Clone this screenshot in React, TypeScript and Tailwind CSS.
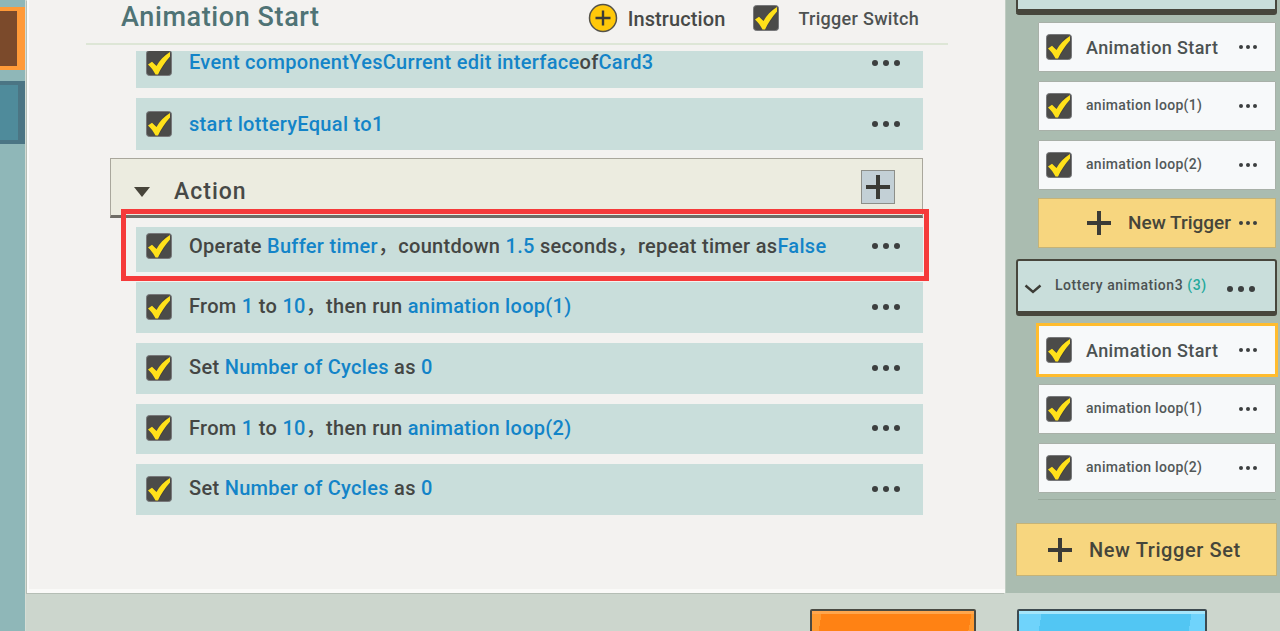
import React from 'react';

const blue = 'text-[#1384c8]';

const Check = () => (
  <svg width="28" height="28" viewBox="0 0 28 28" className="shrink-0">
    <rect x="1.5" y="1.5" width="25" height="25" rx="3" fill="#4b4b49" stroke="#77787a" strokeWidth="1" />
    <path d="M6.5 15.5 L12.5 21.5 L23 5" fill="none" stroke="#33332a" strokeWidth="6" strokeLinejoin="round" opacity="0.35" />
    <path d="M3 15.5 L7 12.8 L11.5 17 C14.5 11.5 19 6.5 25 3 L25 7.5 C20 13 16 19 13 25.5 L10.5 25.5 C8.5 21.5 6 18.2 3 15.5 Z" fill="#ffe11a" />
  </svg>
);

const Dots = ({ small }: { small?: boolean }) => (
  <div className={small ? 'flex gap-[3px]' : 'flex gap-[5px]'}>
    {[0, 1, 2].map((i) => (
      <span key={i} className={small ? 'w-[4px] h-[4px] rounded-full bg-[#3c3f3f]' : 'w-[6px] h-[6px] rounded-full bg-[#3c3f3f]'} />
    ))}
  </div>
);

const Plus = ({ size = 24 }: { size?: number }) => (
  <svg width={size} height={size} viewBox="0 0 24 24" className="shrink-0">
    <path d="M10 0h4v10h10v4H14v10h-4V14H0v-4h10z" fill="#3b3b36" />
  </svg>
);

const B = ({ children }: { children: React.ReactNode }) => <span className={blue}>{children}</span>;

const Row = ({ children, className = 'h-[51px] pb-[2px]' }: { children: React.ReactNode; className?: string }) => (
  <div className={`flex items-center bg-[#c9dedb] pl-[9px] pr-[23px] shrink-0 ${className}`}>
    <Check />
    <div className="ml-[16px] -mt-[1px] flex-1 text-[20px] font-medium tracking-[0.3px] whitespace-pre text-[#444644]">{children}</div>
    <Dots />
  </div>
);

const SideItem = ({ label, big }: { label: string; big?: boolean }) => (
  <div className="flex items-center h-[50px] bg-[#f7f9fa] border border-[#a8b0a8] rounded-[1px] pl-[6px] pr-[18px]">
    <Check />
    <div className={big ? 'ml-[13px] flex-1 text-[18px] font-medium tracking-[0.4px] text-[#4c5252]' : 'ml-[13px] -mt-[2px] flex-1 text-[14px] font-medium tracking-[0.3px] text-[#525858]'}>
      {label}
    </div>
    <Dots small />
  </div>
);

export default function App() {
  return (
    <div className="flex w-[1280px] h-[631px] overflow-hidden bg-[#ccd6cd] font-['Roboto','Noto_Sans_CJK_SC',sans-serif]">
      {/* left tabs */}
      <div className="w-[25px] shrink-0 bg-[#8fb7b8] pt-[7px] flex flex-col">
        <div className="h-[63px] bg-[#7b4a2b] border-y-[4px] border-r-[8px] border-[#ff9a38]" />
        <div className="h-[63px] mt-[11px] bg-[#4f8b9b] border-y-[4px] border-r-[7px] border-[#4b7584]" />
      </div>

      <div className="flex-1 flex flex-col min-w-0 border-l border-[#d5ddd5]">
        <div className="flex h-[593px] shrink-0 ml-[1px]">
          {/* editor panel */}
          <div className="w-[978px] shrink-0 bg-[#f3f2f0] border-l-[2px] border-l-[#fbfbfa] border-b-[4px] border-b-[#fafaf8] shadow-[-1px_1px_0_#b5beb5] flex flex-col">
            <div className="ml-[57px] mr-[57px] h-[45px] shrink-0 border-b-[2px] border-[#dde6d6] flex items-center pl-[35px] pb-[7px] pr-[29px]">
              <div className="-mt-[1px] text-[27px] leading-none font-medium tracking-[0.6px] text-[#4f7375]">Animation Start</div>
              <div className="ml-auto flex items-center">
                <svg width="30" height="30" viewBox="0 0 30 30" className="shrink-0">
                  <circle cx="15" cy="15" r="13.5" fill="#ffc80a" stroke="#55534a" strokeWidth="1.5" />
                  <path d="M13.8 7.5h2.4v6.3h6.3v2.4h-6.3v6.3h-2.4v-6.3H7.5v-2.4h6.3z" fill="#3b3b36" />
                </svg>
                <span className="ml-[10px] mt-[2px] text-[20px] font-medium tracking-[0.1px] text-[#474947]">Instruction</span>
                <div className="ml-[27px]"><Check /></div>
                <span className="ml-[18px] text-[18px] font-medium tracking-[0.3px] text-[#4e5252]">Trigger Switch</span>
              </div>
            </div>

            <div className="relative flex-1 ml-[81px] mr-[82px] pt-[6px]">
              <div className="flex flex-col ml-[26px]">
                <div className="h-[37px] overflow-hidden shrink-0 flex flex-col justify-end">
                  <Row className="h-[51px]"><span className={blue}>Event componentYesCurrent edit interface</span>of<B>Card3</B></Row>
                </div>
                <Row className="h-[52px] mt-[10px]"><B>start lotteryEqual to1</B></Row>
              </div>

              <div className="mt-[8px] h-[60px] bg-[#ecece0] border border-[#a9a79c] border-b-[3px] border-b-[#6f6d66] flex items-center pl-[22px] pr-[27px] pt-[10px]">
                <svg width="18" height="12" viewBox="0 0 18 12" className="shrink-0"><path d="M1 1h16l-8 10z" fill="#47443a" /></svg>
                <span className="ml-[23px] text-[23px] font-medium tracking-[1px] text-[#474947]">Action</span>
                <div className="ml-auto -mt-[10px] w-[34px] h-[34px] bg-[#c3d0d6] border border-[#8d8f89] flex items-center justify-center">
                  <Plus />
                </div>
              </div>

              <div className="flex flex-col gap-[10px] ml-[26px] mt-[9px]">
                <Row className="h-[45px] pb-[7px]">Operate <B>Buffer timer</B>，countdown <B>1.5</B> seconds，repeat timer as<B>False</B></Row>
                <Row>From <B>1</B> to <B>10</B>，then run <B>animation loop(1)</B></Row>
                <Row>Set <B>Number of Cycles</B> as <B>0</B></Row>
                <Row className="h-[50px] pb-[2px]">From <B>1</B> to <B>10</B>，then run <B>animation loop(2)</B></Row>
                <Row>Set <B>Number of Cycles</B> as <B>0</B></Row>
              </div>

              {/* red highlight */}
              <div className="absolute left-[11px] top-[164px] w-[808px] h-[72px] border-[5px] border-[#f53a3a]" />
            </div>
          </div>

          {/* triggers sidebar */}
          <div className="flex-1 bg-[#aabcb0] border-l border-[#c0ccc2] pl-[10px] pr-[3px] flex flex-col">
            <div className="h-[15px] shrink-0 bg-[#c9dedb] border-b-[6px] border-x-[2px] border-[#47463c] rounded-b-[3px]" />
            <div className="ml-[22px] mr-[1px] flex flex-col gap-[9px] mt-[7px]">
              <SideItem label="Animation Start" big />
              <SideItem label="animation loop(1)" />
              <SideItem label="animation loop(2)" />
              <div className="flex items-center h-[50px] -mt-[1px] bg-[#f7d67f] border border-[#c5b377] pl-[48px] pr-[18px]">
                <Plus />
                <span className="ml-[17px] flex-1 text-[19px] font-medium tracking-[0px] text-[#45453a]">New Trigger</span>
                <Dots small />
              </div>
            </div>

            <div className="mt-[11px] h-[57px] shrink-0 bg-[#c9dedb] border-[2px] border-b-[5px] border-[#47463c] rounded-[3px] flex items-center pl-[6px] pr-[20px] pt-[5px]">
              <svg width="18" height="10" viewBox="0 0 18 10" className="shrink-0"><path d="M1.5 1.5 L9 8 L16.5 1.5" fill="none" stroke="#3c3c36" strokeWidth="2.4" /></svg>
              <span className="ml-[13px] flex-1 text-[14px] font-medium tracking-[0.55px] text-[#4c5252] -mt-[6px]">
                Lottery animation3 <span className="text-[#25a99c]">(3)</span>
              </span>
              <Dots />
            </div>

            <div className="ml-[22px] mr-[1px] flex flex-col gap-[9px] mt-[9px]">
              <div className="outline-[3px] outline-[#ffbc2e] -outline-offset-[1px]">
                <SideItem label="Animation Start" big />
              </div>
              <SideItem label="animation loop(1)" />
              <SideItem label="animation loop(2)" />
              <div className="h-[1px] -mt-[3px] bg-[#99aa9d]" />
            </div>

            <div className="mt-[23px] h-[53px] shrink-0 bg-[#f7d67f] border border-[#c5b377] flex items-center pl-[31px]">
              <Plus />
              <span className="ml-[17px] text-[20px] font-medium tracking-[0.6px] text-[#45453a]">New Trigger Set</span>
            </div>
          </div>
        </div>

        {/* bottom buttons, cut off by the window */}
        <div className="flex-1 flex pt-[16px] ml-[784px] overflow-hidden">
          <div className="w-[166px] h-[40px] shrink-0 bg-[linear-gradient(100deg,#ff9a30_6%,#ff8214_6%,#ff8214_95%,#ff9a30_95%)] border-[2px] border-[#4a4a42] rounded-[2px] shadow-[inset_0_3px_0_#ffa64d]" />
          <div className="ml-[41px] w-[190px] h-[40px] shrink-0 bg-[linear-gradient(100deg,#6fd3fb_12%,#52c6f3_12%,#52c6f3_90%,#6fd3fb_90%)] border-[2px] border-[#3d4a50] rounded-[2px] shadow-[inset_0_3px_0_#a5e6fb]" />
        </div>
      </div>
    </div>
  );
}
